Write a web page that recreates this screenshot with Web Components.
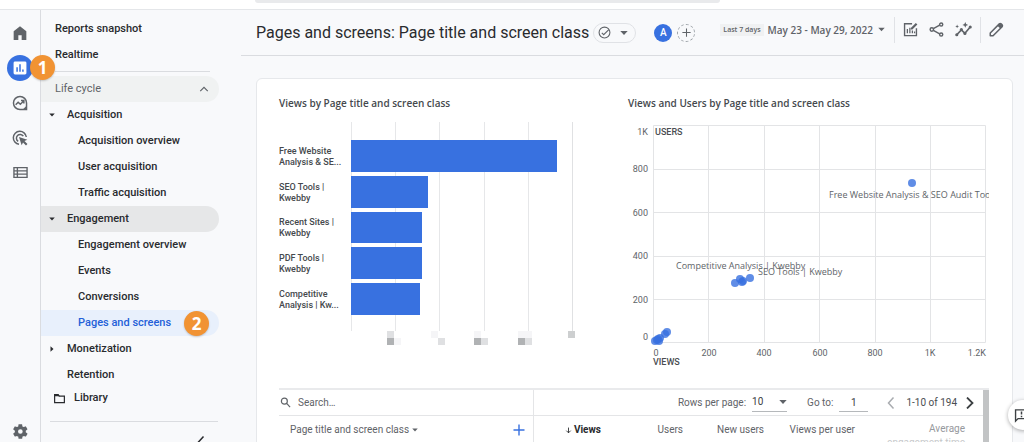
<!DOCTYPE html>
<html lang="en">
<head>
<meta charset="utf-8">
<meta name="viewport" content="width=device-width, initial-scale=1">
<title>Pages and screens</title>
<style>
  html, body { margin: 0; height: 100%; }
  body {
    --ink: #292b2e; --muted: #5f6368; --line: #dadce0;
    --blue: #3871e0; --page: #f8f9fb; --orange: #f19333;
    font-family: Roboto, sans-serif; color: var(--ink); background: var(--page); overflow: hidden;
  }
</style>
</head>
<body>
<ga-app></ga-app>
<script>
const define = (name, html, setup) => {
  const tpl = document.createElement('template');
  tpl.innerHTML = html;
  customElements.define(name, class extends HTMLElement {
    connectedCallback() {
      if (this.shadowRoot) return;
      this.attachShadow({ mode: 'open' }).append(tpl.content.cloneNode(true));
      if (setup) setup(this, this.shadowRoot);
    }
  });
};

/* Icons, all on a 24-unit grid */
const ICONS = {
  home: '<path fill="currentColor" d="M2.500 9.500 12 2l9.500 7.500V22.500h-7v-7h-5v7h-7z"/>',
  reports: '<rect x="1" y="1" width="22" height="22" rx="2.500" fill="#fff"/><path stroke="#3871e0" stroke-width="2.600" d="M7 10.500v8M12 5.500v13M17 14.500v4"/>',
  explore: '<g fill="none" stroke="currentColor" stroke-width="2.200"><path d="M12 2.200a9.800 9.800 0 1 0 0 19.600h9.800V12A9.800 9.800 0 0 0 12 2.200z"/><path d="m5.500 14.500 3.700-3.700 3.300 3.200 5-5M13.500 8.300h4.300v4.300"/></g><path fill="currentColor" d="M16.500 21.500h5v-5z"/>',
  ads: '<g fill="none" stroke="currentColor" stroke-width="2.200"><path d="M10.500 21.500A9.800 9.800 0 1 1 21.500 10.500"/><path d="M9.300 17A5.600 5.600 0 1 1 17 9.300"/></g><path fill="currentColor" d="m10.500 10.500 12.500 4-4.300 2 4.500 4.500-2.200 2.200-4.500-4.500-2 4.300z"/>',
  list: '<path fill="none" stroke="currentColor" stroke-width="2.200" d="M1.500 4.200h21v15.600h-21zM1.500 9.400h21M1.500 14.600h21M7 4.200v15.600"/>',
  gear: '<path fill="currentColor" fill-rule="evenodd" d="M19.400 13c.1-.7.100-1.300 0-2l2.200-1.700c.2-.2.200-.4.100-.7l-2.100-3.600c-.1-.2-.4-.3-.6-.2l-2.600 1a7.500 7.500 0 0 0-1.700-1l-.4-2.700c0-.3-.2-.4-.5-.4H9.700c-.3 0-.5.200-.5.400l-.4 2.700a7.500 7.500 0 0 0-1.700 1l-2.600-1c-.2-.1-.5 0-.6.200L1.800 8.600c-.1.300 0 .5.100.7L4.100 11a8 8 0 0 0 0 2l-2.200 1.700c-.2.200-.2.400-.1.700L3.900 19c.1.200.4.300.6.200l2.600-1c.5.400 1.100.7 1.700 1l.4 2.700c0 .3.200.4.500.4h4.200c.3 0 .5-.2.500-.4l.4-2.700c.6-.3 1.200-.6 1.700-1l2.600 1c.2.100.5 0 .6-.2l2.100-3.600c.1-.3 0-.5-.1-.7zM11.800 15.300a3.300 3.300 0 1 1 0-6.600 3.300 3.300 0 0 1 0 6.600z"/>',
  folder: '<path fill="none" stroke="currentColor" stroke-width="2.200" d="M3 5h6.500l2 2.500H21V19.500H3z"/><path fill="currentColor" d="M3 4h6.500l3 4H3z"/>',
  up: '<path fill="none" stroke="currentColor" stroke-width="2.800" d="m3 17 9-9 9 9"/>',
  left: '<path fill="none" stroke="currentColor" stroke-width="3" d="m17 1-10 11 10 11"/>',
  right: '<path fill="none" stroke="currentColor" stroke-width="3.600" d="m6 1 11 11-11 11"/>',
  down: '<path fill="currentColor" d="M1 6h22L12 18z"/>',
  play: '<path fill="currentColor" d="M6 1v22l12-11z"/>',
  check: '<g fill="none" stroke="currentColor" stroke-width="2"><circle cx="12" cy="12" r="10"/><path d="m7 12.500 3.500 3.500L20 6.500"/></g>',
  plus: '<path fill="none" stroke="currentColor" stroke-width="2.800" d="M12 1v22M1 12h22"/>',
  customize: '<g fill="none" stroke="currentColor" stroke-width="2.200"><path d="M14.500 2.800H2.500v19h19V10"/><path d="M7 11v7M11 9v9M15 13.500V18M18.500 15v3" stroke-width="2"/></g><path fill="currentColor" d="m12.500 9.500 8-8 2.500 2.500-8 8h-2.500z"/>',
  share: '<g fill="none" stroke="currentColor" stroke-width="2.300"><path d="M7 10.500 17 5M7 13.500 17 19"/><circle cx="4.500" cy="12" r="2.700"/><circle cx="19.500" cy="4" r="2.500"/><circle cx="19.500" cy="20" r="2.500"/></g>',
  insights: '<path fill="none" stroke="currentColor" stroke-width="2.300" d="m2.500 19.500 6.500-7 5 5 7.500-9"/><g fill="currentColor"><circle cx="2.500" cy="19.500" r="2.200"/><circle cx="9" cy="12" r="2.200"/><circle cx="14" cy="17.500" r="2.200"/><circle cx="21.500" cy="8.500" r="2.200"/><path d="m14.500 1.500 1.200 2.800 2.800 1.200-2.800 1.200-1.200 2.800-1.200-2.800-2.800-1.200 2.800-1.200zM3 5l.8 1.900 1.900.8-1.900.8L3 10.400l-.8-1.900-1.900-.8 1.900-.8z"/></g>',
  pencil: '<path fill="none" stroke="currentColor" stroke-width="2.400" stroke-linejoin="round" d="M2 22v-4.500L16.500 3q1.500-1.200 3 0l1.500 1.500q1.200 1.500 0 3L6.500 22z"/><path fill="currentColor" d="m13.500 6 4-4 4.500 4.500-4 4z"/>',
  search: '<g fill="none" stroke="currentColor" stroke-width="2.600"><circle cx="9.500" cy="9" r="6.500"/><path d="m14.500 14 7.500 8"/></g>',
  arrow: '<path fill="none" stroke="currentColor" stroke-width="3" d="M12 2v18M4.500 12.500 12 20l7.500-7.500"/>',
  feedback: '<path fill="none" stroke="currentColor" stroke-width="2.200" d="M2.500 21V3h19v14h-15z"/><path stroke="currentColor" stroke-width="2.400" d="M12 5.500v5M12 12.500v2.400"/>'
};
define('ga-icon', `<style>:host{display:block;flex:none}svg{display:block;width:100%;height:100%}</style><svg viewBox="0 0 24 24" aria-hidden="true"></svg>`,
  (el, root) => {
    root.querySelector('svg').innerHTML = ICONS[el.getAttribute('name')];
    const s = (el.getAttribute('size') || 16) + 'px';
    el.style.width = s; el.style.height = s;
  });

define('ga-step', `<style>
  :host{display:grid;place-items:center;width:25px;height:25px;border-radius:50%;background:var(--orange);color:#fff;font:700 17px/25px "Open Sans",sans-serif;box-shadow:0 1px 2px #0003}
</style><slot></slot>`);

define('ga-rail', `<style>
  :host{display:flex;flex-direction:column;justify-content:space-between;flex:none;width:40px;padding:5px 0 0;border-right:1px solid var(--line);color:var(--muted);box-sizing:content-box}
  nav{display:flex;flex-direction:column}
  a{display:grid;place-items:center;height:35px;color:inherit;position:relative}
  .on{justify-self:center;width:26px;height:26px;border-radius:50%;background:var(--blue);display:grid;place-items:center}
  ga-step{position:absolute;left:30px;top:5px;z-index:2}
  .set{height:21px}
</style>
<nav aria-label="Main">
  <a href="#" aria-label="Home"><ga-icon name="home" size="16"></ga-icon></a>
  <a href="#" aria-label="Reports"><span class="on"><ga-icon name="reports" size="14"></ga-icon></span><ga-step>1</ga-step></a>
  <a href="#" aria-label="Explore"><ga-icon name="explore" size="16"></ga-icon></a>
  <a href="#" aria-label="Advertising"><ga-icon name="ads" size="16"></ga-icon></a>
  <a href="#" aria-label="Configure"><ga-icon name="list" size="15"></ga-icon></a>
</nav>
<a class="set" href="#" aria-label="Admin"><ga-icon name="gear" size="17"></ga-icon></a>`);

define('ga-nav-item', `<style>
  :host{display:block;font:500 11px/26px Roboto,sans-serif}
  a{display:flex;align-items:center;height:26px;padding-left:14px;border-radius:0 13px 13px 0;color:inherit;text-decoration:none;white-space:nowrap}
  :host([level="1"]) a{padding-left:26px}
  :host([level="1"]) ga-icon{margin:0 12px 0 -18px}
  :host([level="2"]) a{padding-left:37px}
  :host([section]) a{background:#f0f2f2;color:var(--muted);justify-content:space-between;padding-right:10px;font-weight:400}
  :host([open]) a{background:#e6e7e8}
  :host([current]) a{background:#e8f0fc;color:#2460d8;gap:13px}
</style><a href="#"><slot></slot><slot name="end"></slot></a>`,
  (el, root) => {
    const a = root.querySelector('a'), add = (name, size, end) => {
      const i = document.createElement('ga-icon');
      i.setAttribute('name', name); i.setAttribute('size', size);
      end ? a.append(i) : a.prepend(i);
    };
    if (el.hasAttribute('section')) add('up', 10, true);
    if (el.hasAttribute('caret')) add(el.getAttribute('caret'), 6);
    if (el.hasAttribute('current')) a.setAttribute('aria-current', 'page');
  });

define('ga-sidebar', `<style>
  :host{display:flex;flex-direction:column;flex:none;width:200px;min-height:0}
  .items{flex:1;min-height:0;overflow:hidden;padding:6px 22px 0 0}
  hr{border:0;border-top:1px solid var(--line);margin:0}
  .items hr{margin:3px 9px 4px 14px}
  footer{flex:none;height:64px;overflow:hidden}
  .lib{display:flex;align-items:center;gap:8px;height:26px;margin:7px 0 10px;padding-left:12px;color:inherit;text-decoration:none;font:500 11px/26px Roboto,sans-serif}
  footer hr{margin:0 23px 0 9px}
  button{display:block;border:0;background:none;padding:0;margin:14px 34px 0 auto;color:inherit}
</style>
<nav class="items" aria-label="Reports">
  <ga-nav-item>Reports snapshot</ga-nav-item>
  <ga-nav-item>Realtime</ga-nav-item>
  <hr>
  <ga-nav-item section>Life cycle</ga-nav-item>
  <ga-nav-item level="1" caret="down">Acquisition</ga-nav-item>
  <ga-nav-item level="2">Acquisition overview</ga-nav-item>
  <ga-nav-item level="2">User acquisition</ga-nav-item>
  <ga-nav-item level="2">Traffic acquisition</ga-nav-item>
  <ga-nav-item level="1" caret="down" open>Engagement</ga-nav-item>
  <ga-nav-item level="2">Engagement overview</ga-nav-item>
  <ga-nav-item level="2">Events</ga-nav-item>
  <ga-nav-item level="2">Conversions</ga-nav-item>
  <ga-nav-item level="2" current>Pages and screens<ga-step slot="end">2</ga-step></ga-nav-item>
  <ga-nav-item level="1" caret="play">Monetization</ga-nav-item>
  <ga-nav-item level="1">Retention</ga-nav-item>
</nav>
<footer>
  <a class="lib" href="#"><ga-icon name="folder" size="13"></ga-icon>Library</a>
  <hr>
  <button aria-label="Collapse"><ga-icon name="left" size="12"></ga-icon></button>
</footer>`);

define('ga-toolbar', `<style>
  :host{display:flex;align-items:center;flex:none;height:45px;padding:0 20px 0 15px;color:var(--muted);border-bottom:1px solid var(--line)}
  h1{margin:0;font:400 16px/24px Roboto,sans-serif;color:var(--ink);white-space:nowrap}
  button{border:0;background:none;padding:0;color:inherit;font:inherit;flex:none}
  .status{display:flex;align-items:center;gap:9px;height:20px;width:43px;margin-left:4px;padding:0 7px 0 4px;border:1px solid #e0e2e6;border-radius:10px;box-sizing:border-box}
  .avatar,.add{display:grid;place-items:center;width:18px;height:18px;border-radius:50%;box-sizing:border-box}
  .avatar{margin-left:18px;background:var(--blue);color:#fff;font:500 10px/18px Roboto,sans-serif}
  .add{margin-left:5px;border:1px dashed #9aa0a6}
  .tools{display:flex;align-items:center;margin:0 0 6px auto}
  .chip{background:#f0f1f2;font:600 7px/12px "Open Sans",sans-serif;padding:0 3px}
  .date{display:flex;align-items:center;gap:5px;margin-left:4px;font:600 10px/16px "Open Sans",sans-serif;white-space:nowrap}
  i{width:1px;height:26px;background:#e0e2e6}
  .acts{display:flex;gap:11px;margin:0 8px}
  i:first-of-type{margin-left:9px}
  .edit{margin-left:8px}
</style>
<h1>Pages and screens: Page title and screen class</h1>
<button class="status" aria-label="Report status"><ga-icon name="check" size="13"></ga-icon><ga-icon name="down" size="8"></ga-icon></button>
<button class="avatar" aria-label="All users">A</button>
<button class="add" aria-label="Add comparison"><ga-icon name="plus" size="9"></ga-icon></button>
<div class="tools">
  <span class="chip">Last 7 days</span>
  <button class="date">May 23 - May 29, 2022<ga-icon name="down" size="7"></ga-icon></button>
  <i></i>
  <div class="acts">
    <button aria-label="Customize report"><ga-icon name="customize" size="15"></ga-icon></button>
    <button aria-label="Share"><ga-icon name="share" size="15"></ga-icon></button>
    <button aria-label="Insights"><ga-icon name="insights" size="17"></ga-icon></button>
  </div>
  <i></i>
  <button class="edit" aria-label="Edit"><ga-icon name="pencil" size="15"></ga-icon></button>
</div>`);

define('ga-panel', `<style>
  :host{display:block;min-width:0}
  h2{margin:0 0 12px;font:600 10px/14px "Open Sans",sans-serif;color:#45494d;white-space:nowrap}
</style><h2></h2><slot></slot>`, (el, root) => root.querySelector('h2').textContent = el.getAttribute('heading'));

const BARS = [['Free Website', 'Analysis & SE...', 93], ['SEO Tools |', 'Kwebby', 35], ['Recent Sites |', 'Kwebby', 32], ['PDF Tools |', 'Kwebby', 32], ['Competitive', 'Analysis | Kw...', 31]];
define('ga-bar-chart', `<style>
  :host{display:block;padding-right:55px}
  .chart{display:grid;grid-template-columns:72px minmax(0,1fr);height:209px}
  .labels,.plot{display:grid;grid-auto-rows:1fr;gap:4px;padding:18px 0 16px;box-sizing:border-box}
  .labels{font:500 9px/11px Roboto,sans-serif;color:#45494d;white-space:nowrap}
  .labels span{display:flex;flex-direction:column;justify-content:center;padding-top:2px}
  .plot{border-right:1px solid #e0e1e3;background:repeating-linear-gradient(90deg,#e6e7e9 0 1px,transparent 1px 20%)}
  .bar{background:var(--blue)}
  svg{display:block;margin-left:108px;overflow:visible}
</style>
<div class="chart"><div class="labels"></div><div class="plot"></div></div>
<svg width="190" height="14" viewBox="0 0 190 14" aria-hidden="true" shape-rendering="crispEdges">
  <g fill="#b0b2b4"><path d="M0 7h7v7H0zM87 7h7v7h-7zM131 7h7v7h-7z"/></g>
  <g fill="#dfe0e2"><path d="M0 0h7v7H0zM51 7h7v7h-7zM94 7h7v7h-7zM138 7h7v7h-7z"/></g>
  <g fill="#f5f5f7"><path d="M7 7h7v7H7zM44 0h7v7h-7zM87 0h7v7h-7zM131 0h14v7h-14z"/></g>
  <path fill="#cdcfd0" d="M181 0h7v7h-7z"/>
</svg>`, (el, root) => {
  for (const [a, b, w] of BARS) {
    const label = document.createElement('span');
    for (const t of [a, b]) { const s = document.createElement('div'); s.textContent = t; label.append(s); }
    root.querySelector('.labels').append(label);
    const bar = document.createElement('div');
    bar.className = 'bar'; bar.style.width = w + '%';
    root.querySelector('.plot').append(bar);
  }
});

define('ga-scatter-chart', `<style>
  :host{display:block}
  svg{display:block;max-width:100%;overflow:hidden}
  text{font:400 9px "Open Sans",sans-serif;fill:#606468}
  .n text{font-family:Roboto,sans-serif}
  .b{font:500 9px Roboto,sans-serif;fill:#4a4d51}
</style>
<svg width="361" height="246" viewBox="0 0 361 246" role="img" aria-label="Views and users by page">
  <path fill="none" stroke="#e3e4e6" d="M25.500 3.500h332v217h-332zM25.500 47.500h332M25.500 90.500h332M25.500 134.500h332M25.500 177.500h332M80.500 3.500v217M136.500 3.500v217M191.500 3.500v217M247.500 3.500v217M302.500 3.500v217"/>
  <g class="n" text-anchor="end"><text x="20" y="13">1K</text><text x="20" y="50">800</text><text x="20" y="94">600</text><text x="20" y="137">400</text><text x="20" y="181">200</text><text x="20" y="218">0</text><text x="358" y="234">1.2K</text></g>
  <g class="n" text-anchor="middle"><text x="28" y="234">0</text><text x="81" y="234">200</text><text x="136" y="234">400</text><text x="192" y="234">600</text><text x="247" y="234">800</text><text x="302" y="234">1K</text></g>
  <text class="b" x="27" y="13">USERS</text><text class="b" x="25" y="243">VIEWS</text>
  <g fill="#3871e0" fill-opacity=".8">
    <circle cx="284" cy="61" r="4"/><circle cx="107" cy="161" r="4"/><circle cx="112" cy="157" r="4"/><circle cx="115" cy="159" r="4"/><circle cx="114" cy="160" r="4"/><circle cx="122" cy="156" r="4"/>
    <circle cx="39" cy="210" r="4"/><circle cx="37" cy="212" r="4"/><circle cx="32" cy="216" r="4"/><circle cx="30" cy="217" r="4"/><circle cx="31" cy="219" r="4"/><circle cx="29" cy="218" r="4"/><circle cx="27" cy="219" r="4"/>
  </g>
  <text x="201" y="76">Free Website Analysis &amp; SEO Audit Tools</text>
  <text x="48" y="147">Competitive Analysis | Kwebby</text>
  <text x="130" y="153">SEO Tools | Kwebby</text>
</svg>`);

define('ga-report-table', `<style>
  :host{display:flex;border-top:2px solid #e9eaec;overflow:hidden;color:var(--muted);font:400 10px/14px Roboto,sans-serif}
  .wrap{flex:1;min-width:0;overflow:hidden}
  .track{flex:none;width:6px;background:#c2c4c5}
  table{width:100%;border-collapse:collapse;table-layout:fixed}
  td,th{padding:0;font-weight:400;text-align:right;vertical-align:top;white-space:nowrap}
  tr:first-child td{height:25px;vertical-align:middle;border-bottom:1px solid #e4e5e7}
  tr>:first-child{border-right:1px solid #e4e5e7}
  .f{display:flex;align-items:center}
  .find{gap:7px;padding-left:1px}
  input{border:0;background:none;outline:0;padding:0;margin:0;font:inherit;color:inherit;min-width:0;appearance:none}
  input::placeholder{color:var(--muted);opacity:1}
  .pager{justify-content:flex-end;padding-right:7px}
  .select{display:flex;align-items:center;border-bottom:1px solid #b5b8bb;margin:0 20px 0 6px}
  select{appearance:none;border:0;background:none;padding:0;margin:0;font:inherit;color:#3c4043;width:27px;height:17px}
  .go{border-bottom:1px solid #b5b8bb;width:29px;height:17px;margin:0 17px 0 6px;text-align:center;color:#3c4043}
  button{border:0;background:none;padding:0;font:inherit;color:inherit;display:flex;align-items:center;gap:3px}
  .range{margin:0 7px 0 9px;color:#4a4d51}
  .prev{color:#a9acb0}.next{color:#3c4043}
  th{padding-top:7px;height:30px}
  .dim{justify-content:space-between;padding:0 8px 0 11px}
  .dim ga-icon[name=plus]{color:var(--blue)}
  .sort{display:inline-flex;align-items:center;gap:2px;color:var(--ink);font-weight:700}
  .fade{padding:6px 18px 0 0;color:#96999d}
  .fade span{color:#c6c8ca}
</style>
<div class="wrap"><table>
  <colgroup><col style="width:254px"><col style="width:68px"><col style="width:82px"><col style="width:81px"><col style="width:91px"><col></colgroup>
  <thead>
  <tr>
    <td><div class="f find"><ga-icon name="search" size="11"></ga-icon><input type="search" placeholder="Search…" aria-label="Search"></div></td>
    <td colspan="5"><div class="f pager">
      <label for="rows">Rows per page:</label>
      <span class="select"><select id="rows"><option>10</option><option>25</option></select><ga-icon name="down" size="8"></ga-icon></span>
      <label for="page">Go to:</label><input class="go" id="page" value="1">
      <button class="prev" aria-label="Previous page"><ga-icon name="left" size="12"></ga-icon></button>
      <span class="range">1-10 of 194</span>
      <button class="next" aria-label="Next page"><ga-icon name="right" size="12"></ga-icon></button>
    </div></td>
  </tr>
  <tr>
    <th><div class="f dim"><button>Page title and screen class<ga-icon name="down" size="6"></ga-icon></button><ga-icon name="plus" size="12"></ga-icon></div></th>
    <th><span class="sort"><ga-icon name="arrow" size="7"></ga-icon>Views</span></th>
    <th>Users</th><th>New users</th><th>Views per user</th>
    <th class="fade">Average<br><span>engagement time</span></th>
  </tr>
  </thead>
</table></div><div class="track"></div>`);

define('ga-card', `<style>
  :host{display:block;background:#fff;border:1px solid #e6e8eb;border-radius:6px;padding:17px 23px 0 22px}
  .charts{display:grid;grid-template-columns:minmax(0,349fr) minmax(0,361fr);margin-bottom:20px}
</style>
<div class="charts">
  <ga-panel heading="Views by Page title and screen class"><ga-bar-chart></ga-bar-chart></ga-panel>
  <ga-panel heading="Views and Users by Page title and screen class"><ga-scatter-chart></ga-scatter-chart></ga-panel>
</div>
<ga-report-table></ga-report-table>`);

define('ga-app', `<style>
  :host{display:flex;flex-direction:column;height:100vh;overflow:hidden}
  header{flex:none;display:flex;height:9px;background:#fff;border-bottom:1px solid #e4e6e9;padding-left:255px}
  .box{width:465px;height:3px;background:#e9eaec;border-radius:0 0 3px 3px}
  .body{flex:1;display:flex;min-height:0}
  main{flex:1;min-width:0;display:flex;flex-direction:column}
  .scroll{flex:1;min-height:0;overflow:hidden;padding:22px 11px 0 15px}
  .feedback{position:fixed;right:-14px;bottom:12px;width:30px;height:30px;border:0;border-radius:50%;background:#fff;color:#3c4043;box-shadow:0 1px 4px #0005;padding:0 0 0 6px}
</style>
<header><div class="box"></div></header>
<div class="body">
  <ga-rail></ga-rail>
  <ga-sidebar></ga-sidebar>
  <main><ga-toolbar></ga-toolbar><div class="scroll"><ga-card></ga-card></div></main>
</div>
<button class="feedback" aria-label="Send feedback"><ga-icon name="feedback" size="15"></ga-icon></button>`);
</script>
</body>
</html>
